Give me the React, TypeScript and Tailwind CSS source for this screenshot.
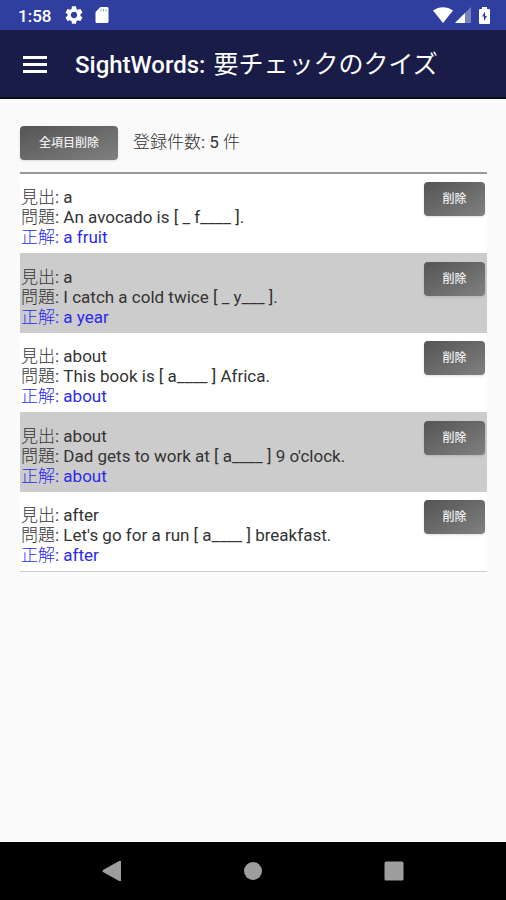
const quizzes = [
  { word: "a", question: "An avocado is [ _ f____ ].", answer: "a fruit" },
  { word: "a", question: "I catch a cold twice [ _ y___ ].", answer: "a year" },
  { word: "about", question: "This book is [ a____ ] Africa.", answer: "about" },
  { word: "about", question: "Dad gets to work at [ a____ ] 9 o'clock.", answer: "about" },
  { word: "after", question: "Let's go for a run [ a____ ] breakfast.", answer: "after" },
];

const StatusBar = () => {
  return (
    <div className="h-[30px] bg-[#303f9f] text-white flex items-center justify-between pl-[18px] pr-4">
      <div className="flex items-center">
        <span className="text-[17px] font-medium leading-5 pt-0.5">1:58</span>
        <svg className="w-[18px] h-[18px] ml-[14px] fill-current" viewBox="2 2 20 20">
          <path d="M19.14 12.94c.04-.3.06-.61.06-.94 0-.32-.02-.64-.07-.94l2.03-1.58c.18-.14.23-.41.12-.61l-1.92-3.32c-.12-.22-.37-.29-.59-.22l-2.39.96c-.5-.38-1.03-.7-1.62-.94l-.36-2.54c-.04-.24-.24-.41-.48-.41h-3.84c-.24 0-.43.17-.47.41l-.36 2.54c-.59.24-1.13.57-1.62.94l-2.39-.96c-.22-.08-.47 0-.59.22L2.74 8.87c-.12.21-.08.47.12.61l2.03 1.58c-.05.3-.09.63-.09.94s.02.64.07.94l-2.03 1.58c-.18.14-.23.41-.12.61l1.92 3.32c.12.22.37.29.59.22l2.39-.96c.5.38 1.03.7 1.62.94l.36 2.54c.05.24.24.41.48.41h3.84c.24 0 .44-.17.47-.41l.36-2.54c.59-.24 1.13-.56 1.62-.94l2.39.96c.22.08.47 0 .59-.22l1.92-3.32c.12-.22.07-.47-.12-.61l-2.01-1.58zM12 15.6c-1.98 0-3.6-1.62-3.6-3.6s1.62-3.6 3.6-3.6 3.6 1.62 3.6 3.6-1.62 3.6-3.6 3.6z" />
        </svg>
        <svg className="w-[14px] h-4 ml-3" viewBox="0 0 13 16">
          <path d="M5 0h6.500Q13 0 13 1.500v13Q13 16 11.500 16h-10Q0 16 0 14.500V5z" fill="currentColor" />
          <path d="M5.500 2v2.500M8 2v2.500M10.500 2v2.500" stroke="#9aa3d6" />
        </svg>
      </div>
      <div className="flex items-center">
        <svg className="w-5 h-4 fill-current" viewBox="0 0 20 16">
          <path d="M0 3.500C6-1 14-1 20 3.500L10 16z" />
        </svg>
        <svg className="w-4 h-4 ml-0.5" viewBox="0 0 16 16">
          <path d="M16 0v16H0z" fill="#7681c0" />
          <path d="M10 6v10H0z" fill="currentColor" />
        </svg>
        <svg className="w-[11px] h-[17px] ml-2" viewBox="0 0 11 17">
          <path d="M3 0h5v2h2q1 0 1 1v13q0 1-1 1H1q-1 0-1-1V3q0-1 1-1h2z" fill="currentColor" />
          <path d="M6 4.500L3 9.500H5V14L8 9H6z" fill="#303f9f" />
        </svg>
      </div>
    </div>
  );
};

const App = () => {
  return (
    <div className="min-h-screen flex flex-col bg-[#fafafa] text-[#333333] font-[Roboto,'Noto_Sans_CJK_JP',sans-serif]">
      <StatusBar />

      {/* App bar */}
      <header className="h-[69px] bg-[#1a1c48] border-b-2 border-[#08091c] text-white flex items-center pl-[23px] pt-0.5">
        <button type="button" aria-label="Menu" className="w-6 flex flex-col gap-1">
          <span className="h-[3px] bg-white" />
          <span className="h-[3px] bg-white" />
          <span className="h-[3px] bg-white" />
        </button>
        <h1 className="ml-7 flex items-baseline gap-2 text-2xl font-medium whitespace-nowrap">
          <span>SightWords:</span>
          <span className="text-[25px] font-normal">要チェックのクイズ</span>
        </h1>
      </header>

      <main className="flex-1 pl-5 pr-[19px] pt-[27px]">
        {/* Delete all and count */}
        <div className="flex items-start gap-[15px] pb-3">
          <button
            type="button"
            className="w-[98px] h-[34px] rounded bg-linear-to-br from-[#555555] to-[#808080] text-[#eeeeee] text-xs font-medium shadow"
          >
            全項目削除
          </button>
          <p className="text-[17px] leading-8">
            <span className="font-light">登録件数</span>: 5 <span className="font-light">件</span>
          </p>
        </div>

        {/* Quiz list */}
        <ul className="border-t-2 border-[#999999]">
          {quizzes.map((quiz, index) => (
            <li
              key={index}
              className="min-h-[79px] flex items-start justify-between pl-px pr-0.5 odd:bg-white even:bg-[#cccccc] odd:min-h-20 odd:border-b border-[#cccccc] first:min-h-[79px]"
            >
              <div className="self-end pb-1.5 text-[17px] leading-5">
                <p>
                  <span className="font-light">見出</span>: {quiz.word}
                </p>
                <p>
                  <span className="font-light">問題</span>: {quiz.question}
                </p>
                <p className="text-[#2a2aee]">
                  <span className="font-light">正解</span>: {quiz.answer}
                </p>
              </div>
              <button
                type="button"
                className="mt-2 w-[61px] h-[34px] shrink-0 rounded bg-linear-to-br from-[#555555] to-[#808080] text-[#eeeeee] text-xs font-medium shadow"
              >
                削除
              </button>
            </li>
          ))}
        </ul>
      </main>

      {/* Navigation bar */}
      <nav className="h-[58px] bg-black flex items-center justify-center gap-[121px]">
        <button type="button" aria-label="Back">
          <svg className="w-5 h-5 fill-[#9e9e9e]" viewBox="0 0 20 20">
            <path d="M19 0v20q0 1-1 .5L1 11q-1-1 0-2L18-.5Q19-1 19 0z" />
          </svg>
        </button>
        <button type="button" aria-label="Home">
          <svg className="w-5 h-5 fill-[#9e9e9e]" viewBox="0 0 20 20">
            <circle cx="10" cy="10" r="9" />
          </svg>
        </button>
        <button type="button" aria-label="Recents">
          <svg className="w-5 h-5 fill-[#9e9e9e]" viewBox="0 0 20 20">
            <rect width="19" height="19" x="0.5" y="0.5" rx="1.5" />
          </svg>
        </button>
      </nav>
    </div>
  );
};

export default App;
